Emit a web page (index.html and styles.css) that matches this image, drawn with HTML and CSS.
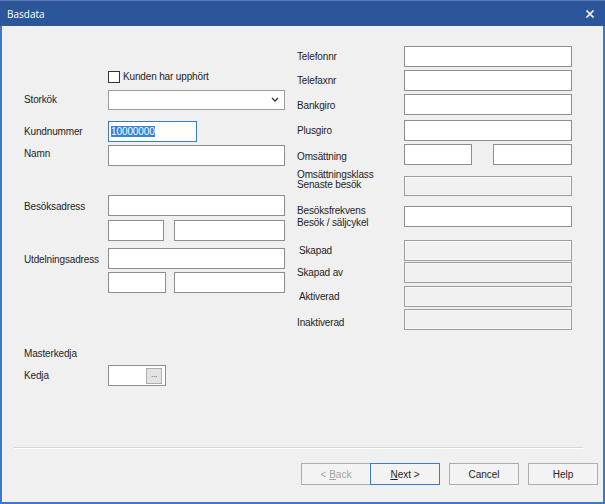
FILE: index.html
```html
<!DOCTYPE html>
<html>
<head>
<meta charset="utf-8">
<link rel="stylesheet" href="styles.css">
</head>
<body>
<div class="window">
  <div class="titlebar">
    <span class="title">Basdata</span>
    <svg class="close" width="10" height="10" viewBox="0 0 10 10"><path d="M1.5 1.5 L8.5 8.5 M8.5 1.5 L1.5 8.5" stroke="#fff" stroke-width="1.7" fill="none"/></svg>
  </div>
  <div class="frame">
    <div class="form">
      <div class="col left">
        <div class="row h12 mt45">
          <span class="lbl"></span>
          <span class="check"></span>
          <span class="checklbl">Kunden har upphört</span>
        </div>
        <div class="row mt6">
          <span class="lbl">Storkök</span>
          <div class="combo w177">
            <svg width="8" height="5" viewBox="0 0 8 5"><path d="M1 1 L4 4 L7 1" stroke="#333" stroke-width="1.3" fill="none"/></svg>
          </div>
        </div>
        <div class="row mt11">
          <span class="lbl">Kundnummer</span>
          <div class="tb focus w89"><span class="sel">10000000</span></div>
        </div>
        <div class="row mt3">
          <span class="lbl up2">Namn</span>
          <div class="tb w177"></div>
        </div>
        <div class="row mt29">
          <span class="lbl dn2">Besöksadress</span>
          <div class="tb w177"></div>
        </div>
        <div class="row mt4">
          <span class="lbl"></span>
          <div class="tb w56"></div>
          <div class="tb w111 ml10"></div>
        </div>
        <div class="row mt7">
          <span class="lbl dn2">Utdelningsadress</span>
          <div class="tb w177"></div>
        </div>
        <div class="row mt3">
          <span class="lbl"></span>
          <div class="tb w58"></div>
          <div class="tb w111 ml8"></div>
        </div>
        <div class="row h12 mt55">
          <span class="lbl">Masterkedja</span>
        </div>
        <div class="row mt5">
          <span class="lbl">Kedja</span>
          <div class="tb kedja w58"><span class="dots">...</span></div>
        </div>
      </div>
      <div class="col right">
        <div class="row mt20">
          <span class="lbl">Telefonnr</span>
          <div class="tb w168"></div>
        </div>
        <div class="row mt3">
          <span class="lbl">Telefaxnr</span>
          <div class="tb w168"></div>
        </div>
        <div class="row mt3">
          <span class="lbl dn2">Bankgiro</span>
          <div class="tb w168"></div>
        </div>
        <div class="row mt5">
          <span class="lbl">Plusgiro</span>
          <div class="tb w168"></div>
        </div>
        <div class="row mt3">
          <span class="lbl dn4">Omsättning</span>
          <div class="tb w68"></div>
          <div class="tb w79 ml21"></div>
        </div>
        <div class="row top mt5">
          <span class="lbl two10">Omsättningsklass<br>Senaste besök</span>
          <div class="tb dis w168 mt6 h20"></div>
        </div>
        <div class="row mt10">
          <span class="lbl two12">Besöksfrekvens<br>Besök / säljcykel</span>
          <div class="tb w168"></div>
        </div>
        <div class="row mt13">
          <span class="lbl ind">Skapad</span>
          <div class="tb dis w168"></div>
        </div>
        <div class="row mt1">
          <span class="lbl">Skapad av</span>
          <div class="tb dis w168"></div>
        </div>
        <div class="row mt3">
          <span class="lbl ind">Aktiverad</span>
          <div class="tb dis w168"></div>
        </div>
        <div class="row mt2">
          <span class="lbl dn6">Inaktiverad</span>
          <div class="tb dis w168"></div>
        </div>
      </div>
    </div>
    <div class="sep"></div>
    <div class="buttons">
      <div class="btn disabled"><span>&lt; <u>B</u>ack</span></div>
      <div class="btn default"><span><u>N</u>ext &gt;</span></div>
      <div class="btn gap"><span>Cancel</span></div>
      <div class="btn gap"><span>Help</span></div>
    </div>
  </div>
</div>
</body>
</html>
```

FILE: styles.css
```css
html, body {
  margin: 0;
  padding: 0;
  background: #f0f0f0;
}
.window {
  width: 605px;
  height: 504px;
  display: flex;
  flex-direction: column;
  font-family: "Liberation Sans", Arial, sans-serif;
  font-size: 10px;
  letter-spacing: -0.15px;
  color: #1e1e1e;
}
.titlebar {
  height: 25px;
  background: #2b579a;
  border-top: 1px solid #5a7db3;
  display: flex;
  align-items: center;
  justify-content: space-between;
  padding: 0 10px 0 7px;
  flex: none;
}
.title {
  font-family: "Open Sans", "Noto Sans", sans-serif;
  font-size: 10px;
  letter-spacing: 0;
  color: #fff;
}
.close {
  display: block;
}
.frame {
  flex: 1;
  background: #f0f0f0;
  border-left: 2px solid #3b78c8;
  border-right: 2px solid #3b78c8;
  border-bottom: 2px solid #3b78c8;
  display: flex;
  flex-direction: column;
}
.form {
  height: 421px;
  display: flex;
  flex: none;
}
.col {
  display: flex;
  flex-direction: column;
}
.left {
  width: 273px;
  padding-left: 22px;
}
.right {
  width: 275px;
}
.row {
  display: flex;
  align-items: center;
  height: 21px;
  flex: none;
}
.row.top {
  align-items: flex-start;
  height: 26px;
}
.h12 { height: 12px; }
.h20 { height: 20px; }
.left .lbl { width: 84px; flex: none; }
.right .lbl { width: 107px; flex: none; }
.lbl { line-height: 12px; white-space: nowrap; }
.up2 { padding-bottom: 4px; }
.dn2 { padding-top: 3px; }
.dn4 { padding-top: 4px; }
.dn6 { padding-top: 6px; }
.ind { padding-left: 2px; width: 105px !important; }
.two10 { line-height: 10px; }
.two12 { line-height: 12px; }

.mt1 { margin-top: 1px; }
.mt2 { margin-top: 2px; }
.mt3 { margin-top: 3px; }
.mt4 { margin-top: 4px; }
.mt5 { margin-top: 5px; }
.mt6 { margin-top: 6px; }
.mt7 { margin-top: 7px; }
.mt10 { margin-top: 10px; }
.mt11 { margin-top: 11px; }
.mt13 { margin-top: 13px; }
.mt20 { margin-top: 20px; }
.mt29 { margin-top: 29px; }
.mt45 { margin-top: 45px; }
.mt55 { margin-top: 55px; }
.ml8 { margin-left: 8px; }
.ml10 { margin-left: 10px; }
.ml21 { margin-left: 21px; }

.w56 { width: 56px; }
.w58 { width: 58px; }
.w68 { width: 68px; }
.w79 { width: 79px; }
.w89 { width: 89px; }
.w111 { width: 111px; }
.w168 { width: 168px; }
.w177 { width: 177px; }

.tb {
  height: 21px;
  box-sizing: border-box;
  background: #fff;
  border: 1px solid #8e8e8e;
  flex: none;
}
.tb.dis {
  background: #f0f0f0;
  border-color: #9c9c9c;
  box-shadow: inset 0 0 0 1px #f8f8f8;
}
.tb.h20 { height: 20px; }
.tb.focus {
  border-color: #3a7bd0;
  display: flex;
  align-items: center;
  padding-left: 2px;
}
.sel {
  background: #3584e0;
  color: #fff;
  line-height: 11px;
  letter-spacing: -0.1px;
}
.check {
  width: 12px;
  height: 12px;
  box-sizing: border-box;
  border: 1px solid #333;
  background: #fff;
  flex: none;
}
.checklbl {
  margin-left: 3px;
  line-height: 12px;
}
.combo {
  height: 20px;
  box-sizing: border-box;
  background: #fff;
  border: 1px solid #9a9a9a;
  display: flex;
  align-items: center;
  justify-content: flex-end;
  padding-right: 5px;
  flex: none;
}
.combo svg { display: block; }
.kedja {
  display: flex;
  align-items: center;
  justify-content: flex-end;
  padding-right: 3px;
}
.dots {
  width: 16px;
  height: 16px;
  box-sizing: border-box;
  background: #e3e3e3;
  border: 1px solid #adadad;
  font-size: 8px;
  line-height: 11px;
  text-align: center;
  color: #333;
}
.sep {
  margin-left: 12px;
  width: 569px;
  height: 0;
  border-top: 1px solid #d6d6d6;
  border-bottom: 1px solid #ffffff;
  flex: none;
}
.buttons {
  display: flex;
  margin-top: 14px;
  padding-left: 299px;
}
.btn {
  width: 70px;
  height: 22px;
  box-sizing: border-box;
  background: #f3f3f3;
  border: 1px solid #adadad;
  display: flex;
  align-items: center;
  justify-content: center;
  color: #1e1e1e;
  letter-spacing: 0;
}
.btn.disabled {
  color: #a3a3a3;
}
.btn.default {
  border-color: #3a7bd0;
  margin-left: -1px;
}
.btn.gap {
  margin-left: 9px;
}
```
